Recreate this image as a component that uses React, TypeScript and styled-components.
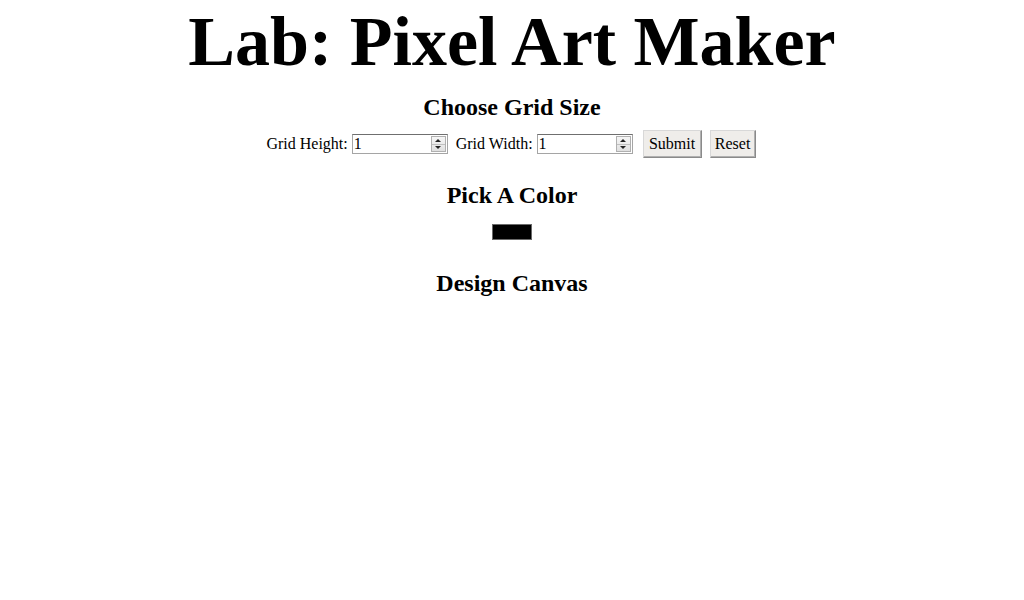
import React from "react";
import styled, { createGlobalStyle } from "styled-components";

const Global = createGlobalStyle`
  html, body { margin: 0; padding: 0; background: #fff; }
  body {
    margin: 0 8px 8px;
    font-family: "Liberation Serif", "Times New Roman", serif;
    color: #000;
    text-align: center;
  }
`;

const Title = styled.h1`
  font-family: "Liberation Serif", "Times New Roman", serif;
  font-size: 70px;
  font-weight: bold;
  margin: 2px 0 12px;
  line-height: normal;
`;

const Heading = styled.h2<{ $first?: boolean }>`
  font-size: 24px;
  font-weight: bold;
  margin: ${(p) => (p.$first ? "12px 0 9px" : "24px 0 9px")};
  line-height: normal;
`;

const Form = styled.form`
  display: flex;
  justify-content: center;
  align-items: center;
  font-size: 16px;
  padding-right: 2px;
`;

const Label = styled.label<{ $space?: number }>`
  display: inline-flex;
  align-items: center;
  gap: 4px;
  margin-left: ${(p) => p.$space ?? 0}px;
`;

const NumberBox = styled.span`
  position: relative;
  display: inline-flex;
  width: 96px;
  height: 20px;
  box-sizing: border-box;
  border: 1px solid #a5a5a5;
  border-top-color: #6f6f6f;
  background: #fff;
`;

const NumberInput = styled.input`
  border: none;
  outline: none;
  width: 76px;
  padding: 0 1px;
  font-family: "Liberation Serif", serif;
  font-size: 16px;
  background: transparent;
  -moz-appearance: textfield;
  &::-webkit-inner-spin-button,
  &::-webkit-outer-spin-button { -webkit-appearance: none; margin: 0; }
`;

const Spinner = styled.span`
  position: absolute;
  right: 1px;
  top: 1px;
  width: 15px;
  height: 16px;
  display: flex;
  flex-direction: column;
  border: 1px solid #b0b0b0;
  box-sizing: border-box;
  background: linear-gradient(#f6f6f6, #e0e0e0);
`;

const SpinHalf = styled.span<{ $up?: boolean }>`
  flex: 1;
  display: flex;
  align-items: center;
  justify-content: center;
  border-bottom: ${(p) => (p.$up ? "1px solid #c0c0c0" : "none")};
  &::after {
    content: "";
    border-left: 3px solid transparent;
    border-right: 3px solid transparent;
    ${(p) => (p.$up ? "border-bottom: 3px solid #222;" : "border-top: 3px solid #222;")}
  }
`;

const Button = styled.button<{ $w: number; $space: number }>`
  font-family: "Liberation Serif", serif;
  font-size: 16px;
  width: ${(p) => p.$w}px;
  height: 28px;
  padding: 0;
  margin-left: ${(p) => p.$space}px;
  background: #efedea;
  border: 1px solid #8a8a8a;
  border-top-color: #d8d8d8;
  border-left-color: #d8d8d8;
  box-shadow: inset -1px -1px 0 #b0b0b0;
  color: #000;
`;

const Swatch = styled.div`
  width: 40px;
  height: 16px;
  margin: 15px auto 30px;
  box-sizing: border-box;
  background: #000;
  border: 1px solid #6a6a6a;
`;

function NumberField({ label, space }: { label: string; space?: number }) {
  return (
    <Label $space={space}>
      {label}
      <NumberBox>
        <NumberInput type="number" defaultValue={1} min={1} />
        <Spinner>
          <SpinHalf $up />
          <SpinHalf />
        </Spinner>
      </NumberBox>
    </Label>
  );
}

export default function App() {
  return (
    <>
      <Global />
      <Title>Lab: Pixel Art Maker</Title>
      <Heading $first>Choose Grid Size</Heading>
      <Form onSubmit={(e) => e.preventDefault()}>
        <NumberField label="Grid Height:" />
        <NumberField label="Grid Width:" space={8} />
        <Button type="submit" $w={59} $space={10}>Submit</Button>
        <Button type="reset" $w={46} $space={8}>Reset</Button>
      </Form>
      <Heading>Pick A Color</Heading>
      <Swatch />
      <Heading>Design Canvas</Heading>
    </>
  );
}
